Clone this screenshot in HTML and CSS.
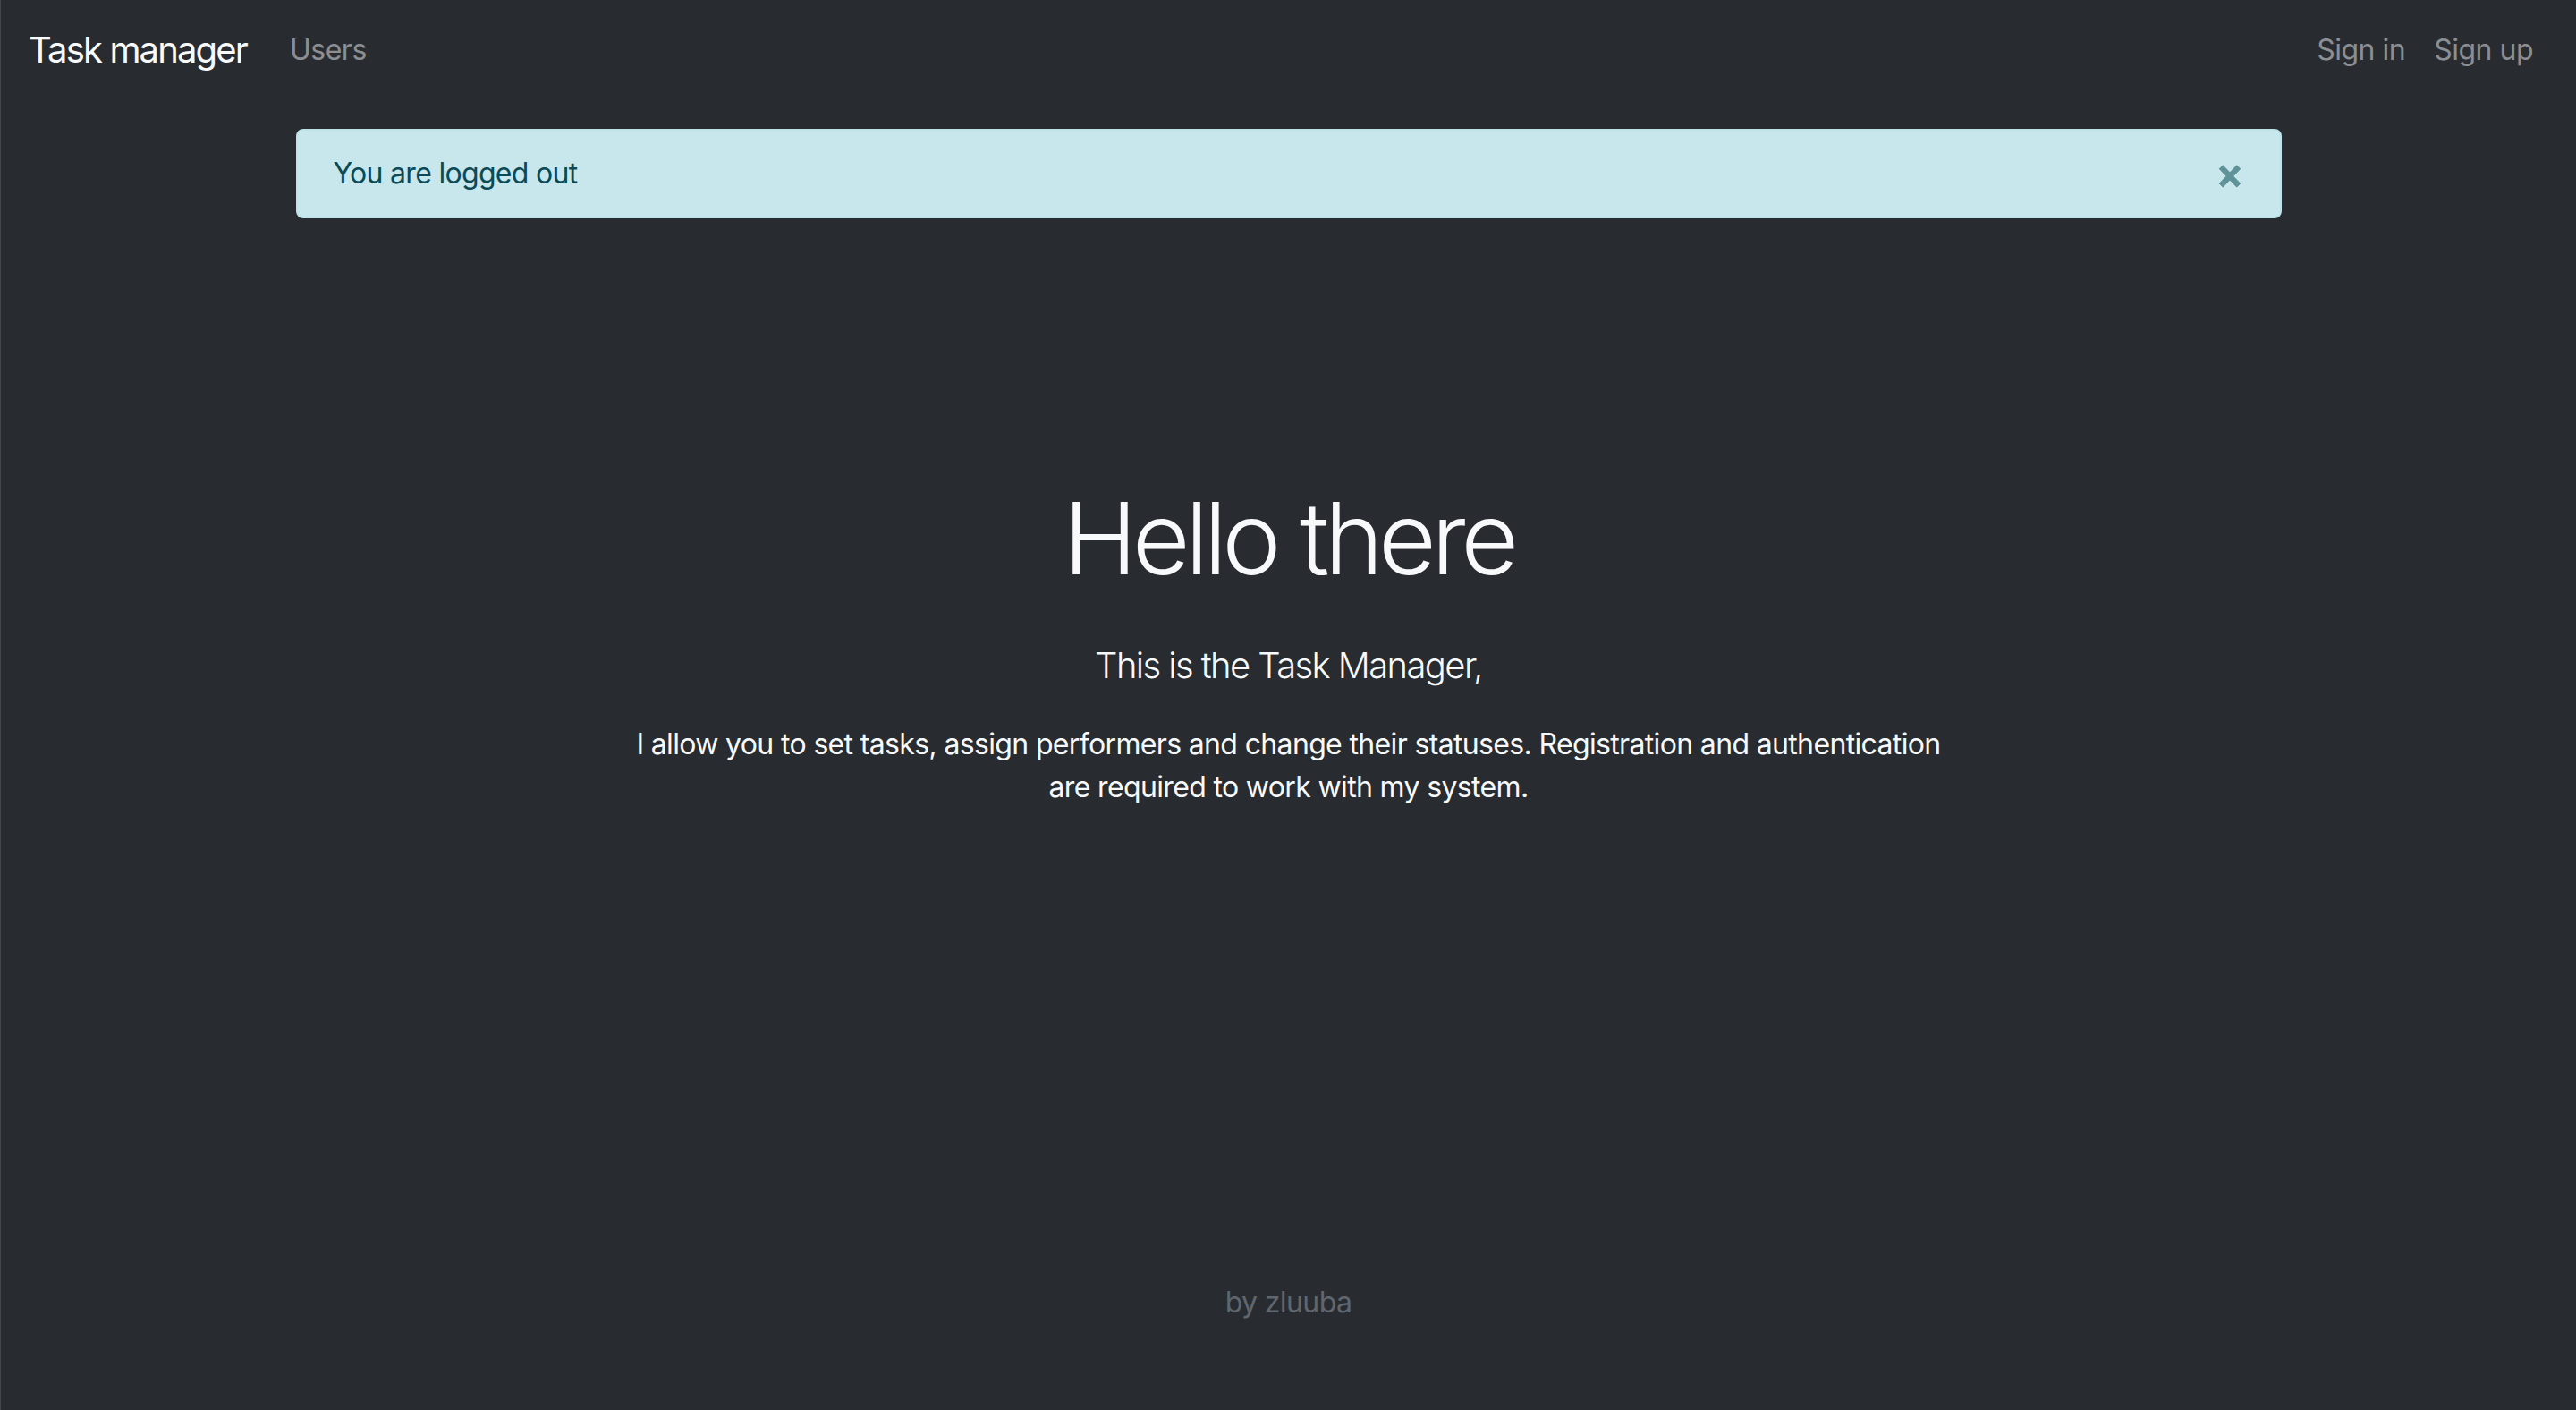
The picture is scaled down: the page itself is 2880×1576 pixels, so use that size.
FILE: index.html
```html
<!DOCTYPE html>
<html lang="en">
<head>
<meta charset="utf-8">
<title>Task manager</title>
<link rel="stylesheet" href="styles.css">
</head>
<body>
<div class="page">
  <nav class="navbar">
    <a class="brand" href="#">Task manager</a>
    <ul class="nav">
      <li><a class="nav-link" href="#">Users</a></li>
    </ul>
    <ul class="nav nav-right">
      <li><a class="nav-link" href="#">Sign in</a></li>
      <li><a class="nav-link" href="#">Sign up</a></li>
    </ul>
  </nav>
  <div class="container">
    <div class="alert">
      <span class="alert-text">You are logged out</span>
      <button class="close" type="button" aria-label="Close">
        <svg width="26" height="28" viewBox="0 0 26 28"><path d="M3 3.5 L23 24.5 M23 3.5 L3 24.5" stroke="#fff" stroke-width="6.4" stroke-opacity="0.5" transform="translate(0 1)"/><path d="M3 3.5 L23 24.5 M23 3.5 L3 24.5" stroke="#5f9299" stroke-width="6.4"/></svg>
      </button>
    </div>
  </div>
  <main class="hero">
    <h1 class="display">Hello there</h1>
    <p class="lead">This is the Task Manager,</p>
    <p class="desc">I allow you to set tasks, assign performers and change their statuses. Registration and authentication are required to work with my system.</p>
  </main>
  <footer class="footer">by zluuba</footer>
</div>
</body>
</html>
```

FILE: styles.css
```css
* { box-sizing: border-box; }
html, body { margin: 0; padding: 0; }
body {
  background: #282c31;
  font-family: Inter, "Noto Sans", sans-serif;
  color: #f8f9fa;
}
.page {
  min-height: 100vh;
  display: flex;
  flex-direction: column;
  border-left: 1px solid #44474b;
}
.navbar {
  display: flex;
  align-items: center;
  padding: 16px 32px 16px 31px;
}
.brand {
  font-size: 40px;
  line-height: 60px;
  padding: 10px 0;
  margin-right: 32px;
  color: #f8f9fa;
  text-decoration: none;
  letter-spacing: -1.85px;
}
.nav {
  list-style: none;
  margin: 0;
  padding: 0;
  display: flex;
}
.nav-right { margin-left: auto; }
.nav-link {
  display: block;
  font-size: 32px;
  line-height: 48px;
  padding: 16px;
  color: #8b8e92;
  text-decoration: none;
  letter-spacing: -0.5px;
}
.container {
  width: 2220px;
  margin: 32px auto 0;
}
.alert {
  display: flex;
  align-items: center;
  justify-content: space-between;
  background: #c7e7ec;
  border: 2px solid #bde3e9;
  border-radius: 8px;
  padding: 24px 40px;
  color: #0b4a56;
  font-size: 32px;
  line-height: 48px;
}
.alert-text { letter-spacing: -0.7px; }
.close {
  background: none;
  border: 0;
  padding: 0;
  margin: 6px 3px 0 0;
  display: flex;
  cursor: pointer;
}
.hero {
  flex: 1;
  display: flex;
  flex-direction: column;
  align-items: center;
  text-align: center;
  padding-top: 290px;
}
.display {
  margin: 0 0 46px;
  font-size: 112px;
  font-weight: 300;
  line-height: 1.2;
  letter-spacing: -5.6px;
}
.lead {
  margin: 0 0 34px;
  font-size: 40px;
  font-weight: 300;
  line-height: 60px;
  letter-spacing: -1.6px;
}
.desc {
  margin: 0;
  max-width: 1500px;
  font-size: 32px;
  line-height: 48px;
  letter-spacing: -0.65px;
}
.footer {
  text-align: center;
  font-size: 32px;
  line-height: 48px;
  color: #5f666d;
  padding-bottom: 96px;
  letter-spacing: -0.6px;
}
```
